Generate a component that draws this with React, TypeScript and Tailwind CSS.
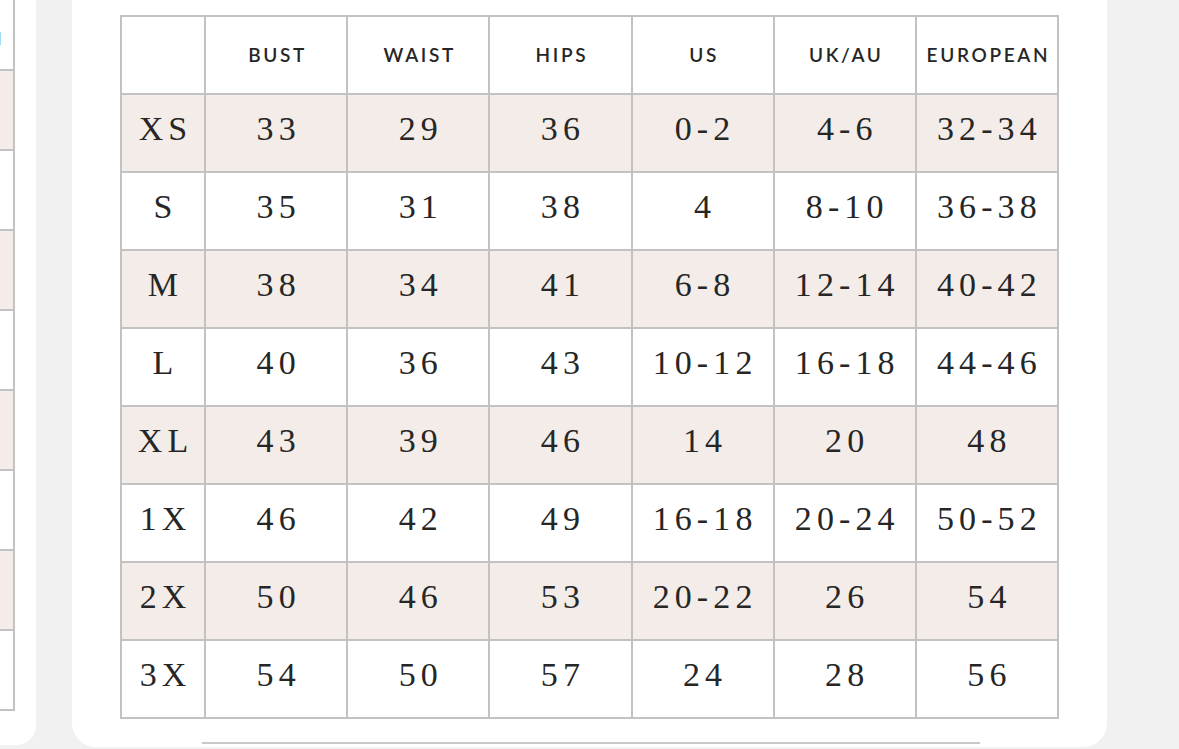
import React from 'react';

const headers = ['BUST', 'WAIST', 'HIPS', 'US', 'UK/AU', 'EUROPEAN'];

const rows: [string, string[]][] = [
  ['XS', ['33', '29', '36', '0-2', '4-6', '32-34']],
  ['S', ['35', '31', '38', '4', '8-10', '36-38']],
  ['M', ['38', '34', '41', '6-8', '12-14', '40-42']],
  ['L', ['40', '36', '43', '10-12', '16-18', '44-46']],
  ['XL', ['43', '39', '46', '14', '20', '48']],
  ['1X', ['46', '42', '49', '16-18', '20-24', '50-52']],
  ['2X', ['50', '46', '53', '20-22', '26', '54']],
  ['3X', ['54', '50', '57', '24', '28', '56']],
];

function SideFragment() {
  return (
    <div className="w-[36px] h-[745px] bg-white rounded-br-[20px] shrink-0 overflow-hidden">
      <div className="w-[15px] border-r-2 border-[#c2c2c2]">
        <div className="h-[71px] border-b-2 border-[#c2c2c2] overflow-hidden flex justify-end items-start pt-[26px] pr-[9px]">
          <span className="text-[17px] font-semibold tracking-[0.14em] text-[#2a2a2a] whitespace-nowrap" style={{ fontFamily: 'Lato, sans-serif' }}>
            EUROPEAN
          </span>
        </div>
        {[0, 1, 2, 3, 4, 5, 6, 7].map(i => (
          <div
            key={i}
            className={`h-[80px] border-b-2 border-[#c2c2c2] ${i % 2 === 0 ? 'bg-[#f3ece8]' : 'bg-white'}`}
          />
        ))}
      </div>
    </div>
  );
}

function SizeTable() {
  return (
    <table className="border-collapse table-fixed w-[939px] text-[#262626]">
      <colgroup>
        <col className="w-[84px]" />
        {headers.map(h => (
          <col key={h} className="w-[142px]" />
        ))}
      </colgroup>
      <thead>
        <tr className="h-[78px] bg-white">
          <th className="border-2 border-[#c2c2c2]" />
          {headers.map(h => (
            <th
              key={h}
              className="border-2 border-[#c2c2c2] text-center align-middle text-[19px] font-semibold tracking-[0.14em] whitespace-nowrap pl-[3px]"
              style={{ fontFamily: 'Lato, sans-serif' }}
            >
              {h}
            </th>
          ))}
        </tr>
      </thead>
      <tbody style={{ fontFamily: '"Liberation Serif", serif' }}>
        {rows.map(([size, values], idx) => (
          <tr key={size} className={`h-[78px] ${idx % 2 === 0 ? 'bg-[#f3ece8]' : 'bg-white'}`}>
            <td className="border-2 border-[#c2c2c2] text-center text-[34px] tracking-[0.15em] pl-[5px] pb-[10px]">{size}</td>
            {values.map((v, i) => (
              <td
                key={i}
                className="border-2 border-[#c2c2c2] text-center text-[34px] tracking-[0.15em] whitespace-nowrap pl-[5px] pb-[10px]"
              >
                {v}
              </td>
            ))}
          </tr>
        ))}
      </tbody>
    </table>
  );
}

export default function App() {
  return (
    <div className="w-[1179px] h-[749px] bg-[#f1f1f1] overflow-hidden flex items-start gap-[36px]">
      <SideFragment />
      <div className="w-[1035px] h-[747px] bg-white rounded-b-[24px] shrink-0 pt-[15px] pl-[48px] flex flex-col">
        <SizeTable />
        <div className="mt-[23px] ml-[82px] w-[778px] h-[2px] bg-[#c8c8c8]" />
      </div>
    </div>
  );
}
